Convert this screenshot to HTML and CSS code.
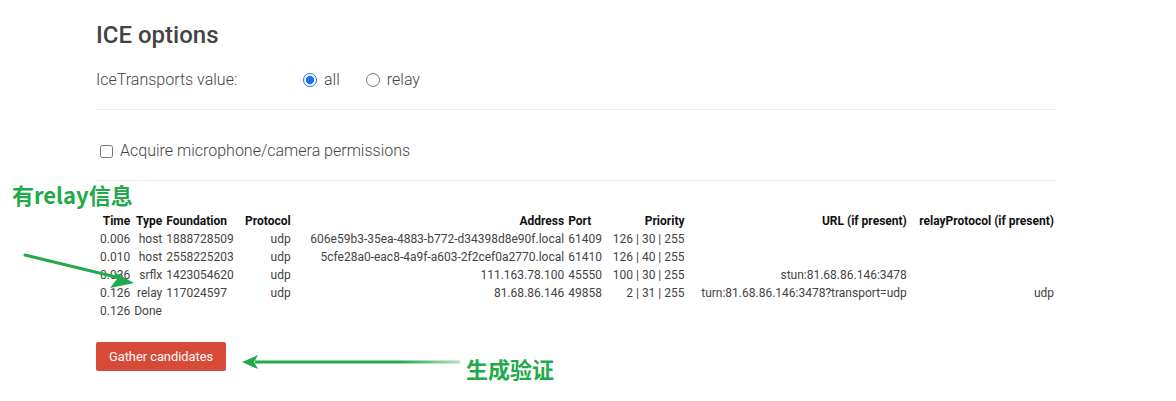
FILE: index.html
```html
<!DOCTYPE html>
<html lang="en">
<head>
<meta charset="utf-8">
<title>Trickle ICE</title>
<link rel="stylesheet" href="styles.css">
</head>
<body>
<div class="page">
  <section class="options">
    <h2 class="title">ICE options</h2>
    <div class="row transports">
      <span class="label">IceTransports value:</span>
      <label class="choice"><input type="radio" name="t" checked> all</label>
      <label class="choice"><input type="radio" name="t"> relay</label>
    </div>
    <hr class="rule">
    <div class="row perm">
      <label class="check"><input type="checkbox"> Acquire microphone/camera permissions</label>
    </div>
    <hr class="rule">
  </section>

  <table class="cands">
    <thead>
      <tr>
        <th class="r">Time</th><th class="r">Type</th><th class="l">Foundation</th><th class="r">Protocol</th><th class="r">Address</th><th class="l">Port</th><th class="r">Priority</th><th class="r">URL (if present)</th><th class="r">relayProtocol (if present)</th>
      </tr>
    </thead>
    <tbody>
      <tr><td class="r">0.006</td><td class="r">host</td><td class="l">1888728509</td><td class="r">udp</td><td class="r">606e59b3-35ea-4883-b772-d34398d8e90f.local</td><td class="l">61409</td><td class="r">126 | 30 | 255</td><td class="r"></td><td class="r"></td></tr>
      <tr><td class="r">0.010</td><td class="r">host</td><td class="l">2558225203</td><td class="r">udp</td><td class="r">5cfe28a0-eac8-4a9f-a603-2f2cef0a2770.local</td><td class="l">61410</td><td class="r">126 | 40 | 255</td><td class="r"></td><td class="r"></td></tr>
      <tr><td class="r">0.036</td><td class="r">srflx</td><td class="l">1423054620</td><td class="r">udp</td><td class="r">111.163.78.100</td><td class="l">45550</td><td class="r">100 | 30 | 255</td><td class="r">stun:81.68.86.146:3478</td><td class="r"></td></tr>
      <tr><td class="r">0.126</td><td class="r">relay</td><td class="l">117024597</td><td class="r">udp</td><td class="r">81.68.86.146</td><td class="l">49858</td><td class="r">2 | 31 | 255</td><td class="r">turn:81.68.86.146:3478?transport=udp</td><td class="r">udp</td></tr>
      <tr><td class="r">0.126</td><td class="l" colspan="8">Done</td></tr>
    </tbody>
  </table>

  <div class="actions">
    <button class="gather">Gather candidates</button>
  </div>
</div>

<div class="note note-relay">有relay信息</div>
<div class="note note-gen">生成验证</div>
<svg class="arrows" width="1176" height="401" viewBox="0 0 1176 401">
  <defs>
    <linearGradient id="fade" gradientUnits="userSpaceOnUse" x1="256" y1="0" x2="460" y2="0">
      <stop offset="0" stop-color="#22a94b"/>
      <stop offset="0.7" stop-color="#22a94b"/>
      <stop offset="1" stop-color="#22a94b" stop-opacity="0.35"/>
    </linearGradient>
  </defs>
  <path d="M25 255 L120 278" stroke="#22a94b" stroke-width="3" fill="none" stroke-linecap="round"/>
  <path d="M134 283 L114 272 L117 279 L110 288 Z" fill="#22a94b"/>
  <path d="M255 362 L460 362" stroke="url(#fade)" stroke-width="3" fill="none"/>
  <path d="M242 362 L258 355 L254 362 L258 369 Z" fill="#22a94b"/>
</svg>
</body>
</html>
```
FILE: styles.css
```css
html, body {
  margin: 0;
  padding: 0;
  background: #fff;
}

body {
  font-family: Roboto, "Liberation Sans", sans-serif;
  font-weight: 300;
  color: #444;
  position: relative;
  width: 1176px;
  height: 401px;
  overflow: hidden;
}

.page {
  width: 960px;
  margin-left: 96px;
  padding-top: 21px;
}

.title {
  font-size: 24px;
  font-weight: 500;
  line-height: 29px;
  margin: 0 0 19px 0;
  color: #444;
}

.row {
  display: flex;
  align-items: center;
  font-size: 16px;
  line-height: 22px;
}

.transports .label {
  width: 207px;
}

.choice {
  display: inline-flex;
  align-items: center;
  margin-right: 26px;
}

.choice input {
  margin: 0 7px 0 0;
  width: 14px;
  height: 14px;
  accent-color: #1a73e8;
}

.rule {
  border: 0;
  border-top: 1px solid #eee;
  margin: 18px 0 0 0;
  height: 0;
}

.perm {
  margin-top: 30px;
}

.check {
  display: inline-flex;
  align-items: center;
  margin-left: 4px;
}

.check input {
  margin: 0 7px 0 0;
  width: 13px;
  height: 13px;
}

.perm + .rule {
  margin-top: 18px;
}

.cands {
  width: 960px;
  border-collapse: collapse;
  margin-top: 31px;
  font-size: 12px;
  line-height: 18px;
}

.cands th {
  font-weight: 700;
  color: #111;
  padding: 0 2px;
  white-space: nowrap;
}

.cands td {
  font-weight: 400;
  color: #444;
  padding: 0 2px;
  white-space: nowrap;
}

.cands .r { text-align: right; }
.cands .l { text-align: left; }

.actions {
  margin-top: 22px;
}

.gather {
  background: #d84a38;
  color: #fff;
  border: none;
  border-radius: 2px;
  font-family: Roboto, "Liberation Sans", sans-serif;
  font-size: 12.8px;
  font-weight: 400;
  height: 29px;
  padding: 0 13px;
}

.note {
  position: absolute;
  color: #22a94b;
  font-family: "Noto Sans CJK SC", "Noto Sans", sans-serif;
  font-weight: 700;
  font-size: 22px;
  line-height: 26px;
}

.note-relay {
  left: 12px;
  top: 181px;
}

.note-gen {
  left: 466px;
  top: 355px;
}

.arrows {
  position: absolute;
  left: 0;
  top: 0;
  pointer-events: none;
}
```
